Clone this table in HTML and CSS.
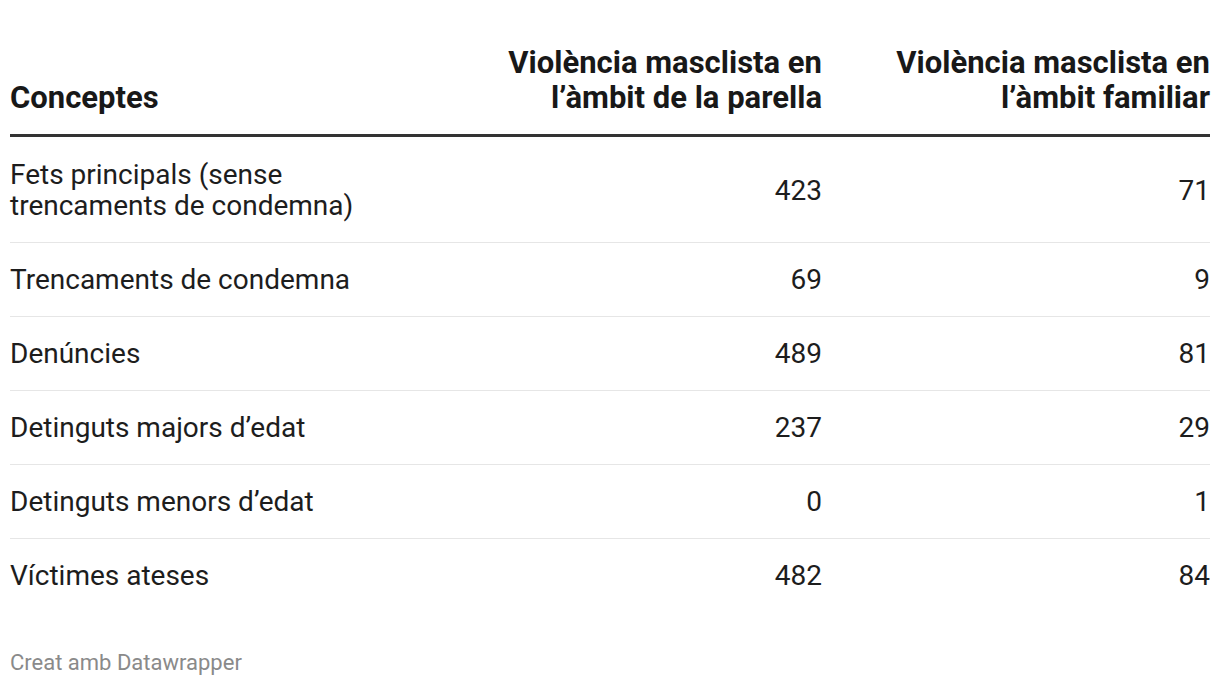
FILE: index.html
```html
<!DOCTYPE html>
<html lang="ca">
<head>
<meta charset="utf-8">
<title>Violència masclista</title>
<link rel="stylesheet" href="styles.css">
</head>
<body>
<div class="chart">
  <table class="dw-table">
    <thead>
      <tr>
        <th class="col-label">Conceptes</th>
        <th class="col-num col-a">Violència masclista en l’àmbit de la parella</th>
        <th class="col-num col-b">Violència masclista en l’àmbit familiar</th>
      </tr>
    </thead>
    <tbody>
      <tr class="first">
        <td class="col-label">Fets principals (sense trencaments de condemna)</td>
        <td class="col-num">423</td>
        <td class="col-num">71</td>
      </tr>
      <tr>
        <td class="col-label">Trencaments de condemna</td>
        <td class="col-num">69</td>
        <td class="col-num">9</td>
      </tr>
      <tr>
        <td class="col-label">Denúncies</td>
        <td class="col-num">489</td>
        <td class="col-num">81</td>
      </tr>
      <tr>
        <td class="col-label">Detinguts majors d’edat</td>
        <td class="col-num">237</td>
        <td class="col-num">29</td>
      </tr>
      <tr>
        <td class="col-label">Detinguts menors d’edat</td>
        <td class="col-num">0</td>
        <td class="col-num">1</td>
      </tr>
      <tr class="last">
        <td class="col-label">Víctimes ateses</td>
        <td class="col-num">482</td>
        <td class="col-num">84</td>
      </tr>
    </tbody>
  </table>
  <div class="footer">Creat amb Datawrapper</div>
</div>
</body>
</html>
```
FILE: styles.css
```css
html, body {
  margin: 0;
  padding: 0;
  background: #ffffff;
}
body {
  font-family: Roboto, "Liberation Sans", sans-serif;
  color: #1d1d1d;
}
.chart {
  padding: 45px 10px 0 10px;
}
.dw-table {
  width: 1200px;
  border-collapse: collapse;
  table-layout: fixed;
}
.dw-table th {
  font-weight: 700;
  font-size: 31px;
  line-height: 35px;
  vertical-align: bottom;
  padding: 0 0 19px 0;
  border-bottom: 3px solid #333333;
  color: #181818;
}
.dw-table th.col-label { text-align: left; width: 480px; }
.dw-table th.col-a { width: 332px; }
.dw-table th.col-b { width: 388px; }
.dw-table td {
  font-size: 28px;
  line-height: 31px;
  padding: 21px 0 21px 0;
  border-bottom: 1px solid #e6e6e6;
  vertical-align: middle;
}
.dw-table tr.first td { padding-top: 22px; }
.dw-table tr.last td { border-bottom: none; }
.col-label { text-align: left; }
.col-num { text-align: right; }
.dw-table td.col-label { padding-right: 90px; }
.footer {
  margin-top: 38px;
  font-size: 22px;
  line-height: 26px;
  color: #8a8a8a;
}
```
